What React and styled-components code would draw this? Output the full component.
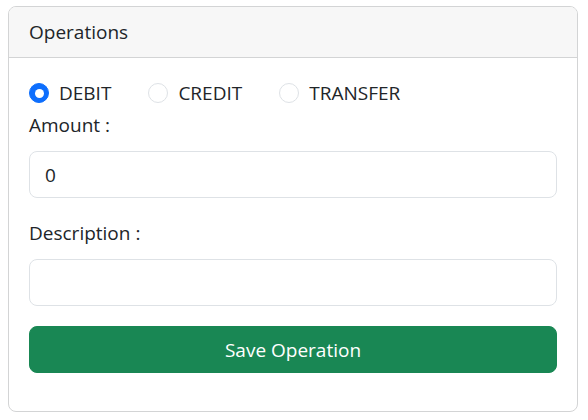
import React from "react";
import styled, { createGlobalStyle } from "styled-components";

const Global = createGlobalStyle`
  html, body { margin: 0; padding: 0; background: #fff; }
  body {
    font-family: "Segoe UI", "Open Sans", "Noto Sans", sans-serif;
    font-size: 19px;
    line-height: 30px;
    color: #212529;
  }
  * { box-sizing: border-box; }
`;

const Page = styled.div`
  padding: 6px 0 0 8px;
`;

const Card = styled.div`
  width: 570px;
  border: 1px solid #d3d4d5;
  border-radius: 8px;
  overflow: hidden;
  background: #fff;
`;

const CardHeader = styled.div`
  background: #f7f7f7;
  border-bottom: 1px solid #d3d4d5;
  padding: 10px 20px;
  line-height: 30px;
`;

const CardBody = styled.form`
  padding: 20px 20px 38px;
  display: flex;
  flex-direction: column;
`;

const RadioRow = styled.div`
  display: flex;
  align-items: center;
  height: 30px;
  margin-bottom: 2px;
`;

const Option = styled.label`
  display: flex;
  align-items: center;
  margin-right: 37px;
  cursor: pointer;
`;

const Radio = styled.span`
  width: 20px;
  height: 20px;
  border-radius: 50%;
  margin-right: 10px;
  flex: none;
  background: ${(p) => (p.$checked ? "#0d6efd" : "#fff")};
  border: 1px solid ${(p) => (p.$checked ? "#0d6efd" : "#dee2e6")};
  display: flex;
  align-items: center;
  justify-content: center;
  &::after {
    content: "";
    display: ${(p) => (p.$checked ? "block" : "none")};
    width: 9px;
    height: 9px;
    border-radius: 50%;
    background: #fff;
  }
`;

const Label = styled.div`
  line-height: 30px;
  margin-bottom: 11px;
`;

const Input = styled.input`
  display: block;
  width: 100%;
  height: 47px;
  padding: 7px 15px;
  font: inherit;
  color: #212529;
  border: 1px solid #dee2e6;
  border-radius: 8px;
  background: #fff;
  margin-bottom: 20px;
  outline: none;
`;

const SaveButton = styled.button`
  height: 47px;
  width: 100%;
  border: 1px solid #198754;
  border-radius: 8px;
  background: #198754;
  color: #fff;
  font: inherit;
  line-height: 30px;
`;

const options = ["DEBIT", "CREDIT", "TRANSFER"];

export default function App() {
  return (
    <>
      <Global />
      <Page>
        <Card>
          <CardHeader>Operations</CardHeader>
          <CardBody onSubmit={(e) => e.preventDefault()}>
            <RadioRow>
              {options.map((o, i) => (
                <Option key={o}>
                  <Radio $checked={i === 0} />
                  {o}
                </Option>
              ))}
            </RadioRow>
            <Label>Amount :</Label>
            <Input type="text" defaultValue="0" />
            <Label>Description :</Label>
            <Input type="text" defaultValue="" />
            <SaveButton type="submit">Save Operation</SaveButton>
          </CardBody>
        </Card>
      </Page>
    </>
  );
}
